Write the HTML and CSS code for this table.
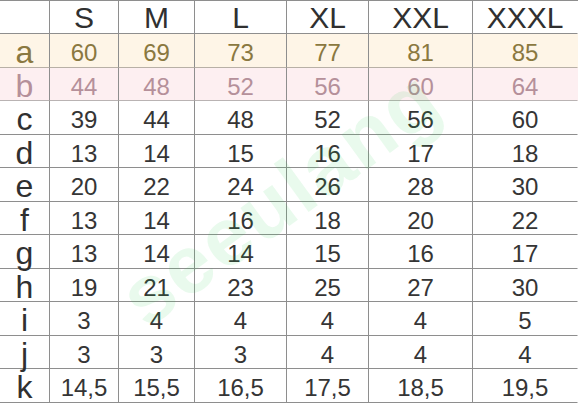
FILE: index.html
```html
<!DOCTYPE html>
<html>
<head>
<meta charset="utf-8">
<link rel="stylesheet" href="styles.css">
</head>
<body>
<div class="chart">
  <div class="grid">
    <div class="cell head"></div><div class="cell head">S</div><div class="cell head">M</div><div class="cell head">L</div><div class="cell head">XL</div><div class="cell head">XXL</div><div class="cell head">XXXL</div>

    <div class="cell lab row-a">a</div><div class="cell num row-a">60</div><div class="cell num row-a">69</div><div class="cell num row-a">73</div><div class="cell num row-a">77</div><div class="cell num row-a">81</div><div class="cell num row-a">85</div>

    <div class="cell lab row-b">b</div><div class="cell num row-b">44</div><div class="cell num row-b">48</div><div class="cell num row-b">52</div><div class="cell num row-b">56</div><div class="cell num row-b">60</div><div class="cell num row-b">64</div>

    <div class="cell lab">c</div><div class="cell num">39</div><div class="cell num">44</div><div class="cell num">48</div><div class="cell num">52</div><div class="cell num">56</div><div class="cell num">60</div>

    <div class="cell lab">d</div><div class="cell num">13</div><div class="cell num">14</div><div class="cell num">15</div><div class="cell num">16</div><div class="cell num">17</div><div class="cell num">18</div>

    <div class="cell lab">e</div><div class="cell num">20</div><div class="cell num">22</div><div class="cell num">24</div><div class="cell num">26</div><div class="cell num">28</div><div class="cell num">30</div>

    <div class="cell lab">f</div><div class="cell num">13</div><div class="cell num">14</div><div class="cell num">16</div><div class="cell num">18</div><div class="cell num">20</div><div class="cell num">22</div>

    <div class="cell lab">g</div><div class="cell num">13</div><div class="cell num">14</div><div class="cell num">14</div><div class="cell num">15</div><div class="cell num">16</div><div class="cell num">17</div>

    <div class="cell lab">h</div><div class="cell num">19</div><div class="cell num">21</div><div class="cell num">23</div><div class="cell num">25</div><div class="cell num">27</div><div class="cell num">30</div>

    <div class="cell lab">i</div><div class="cell num">3</div><div class="cell num">4</div><div class="cell num">4</div><div class="cell num">4</div><div class="cell num">4</div><div class="cell num">5</div>

    <div class="cell lab">j</div><div class="cell num">3</div><div class="cell num">3</div><div class="cell num">3</div><div class="cell num">4</div><div class="cell num">4</div><div class="cell num">4</div>

    <div class="cell lab">k</div><div class="cell num">14,5</div><div class="cell num">15,5</div><div class="cell num">16,5</div><div class="cell num">17,5</div><div class="cell num">18,5</div><div class="cell num">19,5</div>
  </div>
  <div class="watermark">seeulang</div>
</div>
</body>
</html>
```
FILE: styles.css
```css
html, body {
  margin: 0;
  padding: 0;
  background: #ffffff;
}

body {
  font-family: "Liberation Sans", Arial, sans-serif;
  color: #333333;
  overflow: hidden;
}

.chart {
  position: relative;
  width: 578px;
  height: 404px;
  overflow: hidden;
}

.grid {
  display: grid;
  grid-template-columns: 50px 69px 76px 92px 82px 104px 105px;
  grid-template-rows: repeat(6, 33px 34px);
  border-top: 1px solid #8e8e8e;
}

.cell {
  box-sizing: border-box;
  display: flex;
  align-items: center;
  justify-content: center;
  border-right: 1px solid #8e8e8e;
  border-bottom: 1px solid #8e8e8e;
  line-height: 1.15;
  white-space: nowrap;
}

.cell:nth-child(7n) {
  border-right-color: transparent;
}

.head {
  font-size: 30px;
  padding-top: 3px;
  color: #303030;
}

.lab {
  font-size: 32px;
  padding-top: 4px;
  color: #303030;
}

.num {
  font-size: 24px;
  padding-top: 5px;
  color: #353535;
}

.row-a {
  background: #fef5e7;
  color: #8a7840;
  border-bottom-color: #b8b0a6;
}

.row-b {
  background: #fdeff1;
  color: #b5909a;
  border-bottom-color: #b9b3b3;
}

.watermark {
  position: absolute;
  left: 280px;
  top: 198px;
  transform: translate(-50%, -50%) rotate(-36deg);
  font-size: 82px;
  font-weight: bold;
  letter-spacing: 2px;
  color: rgba(40, 210, 80, 0.1);
  pointer-events: none;
  white-space: nowrap;
}
```
